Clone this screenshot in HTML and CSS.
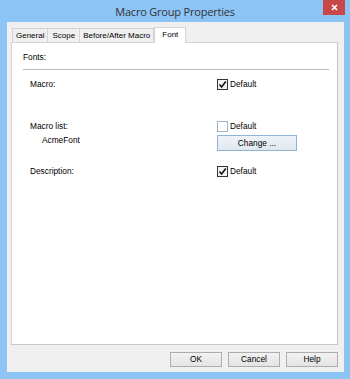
FILE: index.html
```html
<!DOCTYPE html>
<html>
<head>
<meta charset="utf-8">
<link rel="stylesheet" href="styles.css">
</head>
<body>
<div class="window">
  <div class="titlebar">
    <div class="title">Macro Group Properties</div>
    <div class="close">
      <svg width="7" height="7" viewBox="0 0 7 7"><path d="M1 1L6 6M6 1L1 6" stroke="#fff" stroke-width="1.6"/></svg>
    </div>
  </div>
  <div class="client">
    <div class="tabs">
      <div class="tab">General</div>
      <div class="tab">Scope</div>
      <div class="tab">Before/After Macro</div>
      <div class="tab active">Font</div>
    </div>
    <div class="panel">
      <div class="fonts">Fonts:</div>
      <div class="sep"></div>
      <div class="row r1">
        <div class="lbl">Macro:</div>
        <div class="chk"><span class="box checked"><svg width="9" height="9" viewBox="0 0 9 9"><path d="M1.5 4.5L3.6 7L7.8 1.5" fill="none" stroke="#111" stroke-width="1.6"/></svg></span>Default</div>
      </div>
      <div class="row r2">
        <div class="lbl">Macro list:</div>
        <div class="chk"><span class="box"></span>Default</div>
      </div>
      <div class="row r3">
        <div class="lbl sub">AcmeFont</div>
        <div class="btn change">Change ...</div>
      </div>
      <div class="row r4">
        <div class="lbl">Description:</div>
        <div class="chk"><span class="box checked"><svg width="9" height="9" viewBox="0 0 9 9"><path d="M1.5 4.5L3.6 7L7.8 1.5" fill="none" stroke="#111" stroke-width="1.6"/></svg></span>Default</div>
      </div>
    </div>
    <div class="buttons">
      <div class="btn">OK</div>
      <div class="btn">Cancel</div>
      <div class="btn">Help</div>
    </div>
  </div>
</div>
</body>
</html>
```
FILE: styles.css
```css
html, body {
  margin: 0;
  padding: 0;
  background: #8cc4f6;
}
.window {
  width: 350px;
  height: 379px;
  background: #8cc4f6;
  box-sizing: border-box;
  display: flex;
  flex-direction: column;
  font-family: "Liberation Sans", Arial, sans-serif;
  font-size: 8.3px;
  color: #000;
}
.titlebar {
  height: 22px;
  display: flex;
  position: relative;
  justify-content: center;
}
.title {
  font-family: "Open Sans", "Noto Sans", sans-serif;
  font-size: 11px;
  color: #333;
  line-height: 22px;
  padding-top: 1px;
  letter-spacing: -0.2px;
}
.close {
  position: absolute;
  left: 323px;
  top: 0;
  width: 22px;
  height: 15px;
  background: #c8484a;
  display: flex;
  align-items: center;
  justify-content: center;
}
.client {
  margin: 0 6px 7px 7px;
  flex: 1;
  background: #f0f0f0;
  display: flex;
  flex-direction: column;
  padding: 5px 6px 5px 4px;
  box-sizing: border-box;
}
.tabs {
  display: flex;
  height: 15px;
  padding-left: 1px;
  align-items: flex-end;
  position: relative;
  z-index: 1;
  font-size: 8px;
}
.tab {
  height: 14px;
  line-height: 13px;
  padding: 0 3px;
  border: 1px solid #d4d4d4;
  border-bottom: none;
  background: #f0f0f0;
  box-sizing: border-box;
}
.tab + .tab { border-left: none; }
.tab:nth-child(2) { padding: 0 4px; }
.tab.active {
  height: 16px;
  background: #fff;
  padding: 0 7px 2px 7px;
  border-left: 1px solid #d4d4d4;
  margin-bottom: -1px;
  line-height: 13px;
}
.panel {
  flex: 1;
  background: #fff;
  border: 1px solid #d4d4d4;
  border-right-color: #c8c8c8;
  border-bottom-color: #c8c8c8;
  display: flex;
  flex-direction: column;
  padding: 0 8px 0 11px;
}
.fonts {
  margin-top: 8px;
  height: 13px;
  line-height: 13px;
}
.sep {
  margin-top: 5px;
  height: 1px;
  background: #b9b9b9;
}
.row {
  display: flex;
  align-items: center;
  padding-left: 7px;
  height: 14px;
}
.r1 { margin-top: 7px; }
.r2 { margin-top: 28px; }
.r3 { margin-top: 2px; height: 17px; align-items: flex-start; }
.r4 { margin-top: 12px; }
.lbl { width: 187px; }
.lbl.sub { padding-left: 12px; width: 175px; line-height: 10px; }
.chk {
  display: flex;
  align-items: center;
}
.box {
  width: 9px;
  height: 9px;
  border: 1px solid #9fb3cc;
  background: #fff;
  margin-right: 2px;
  display: flex;
  align-items: center;
  justify-content: center;
}
.box.checked { border-color: #333; background: #f4f4f4; }
.btn {
  box-sizing: border-box;
  height: 15px;
  line-height: 13px;
  text-align: center;
  border: 1px solid #adadad;
  background: linear-gradient(#f2f2f2, #e4e4e4);
}
.btn.change {
  width: 80px;
  height: 16px;
  line-height: 14px;
  border-color: #8fb2d6;
  background: linear-gradient(#eef3f8, #e2e8ef);
}
.buttons {
  display: flex;
  justify-content: flex-end;
  gap: 6px;
  margin-top: 7px;
}
.buttons .btn { width: 52px; }
```
